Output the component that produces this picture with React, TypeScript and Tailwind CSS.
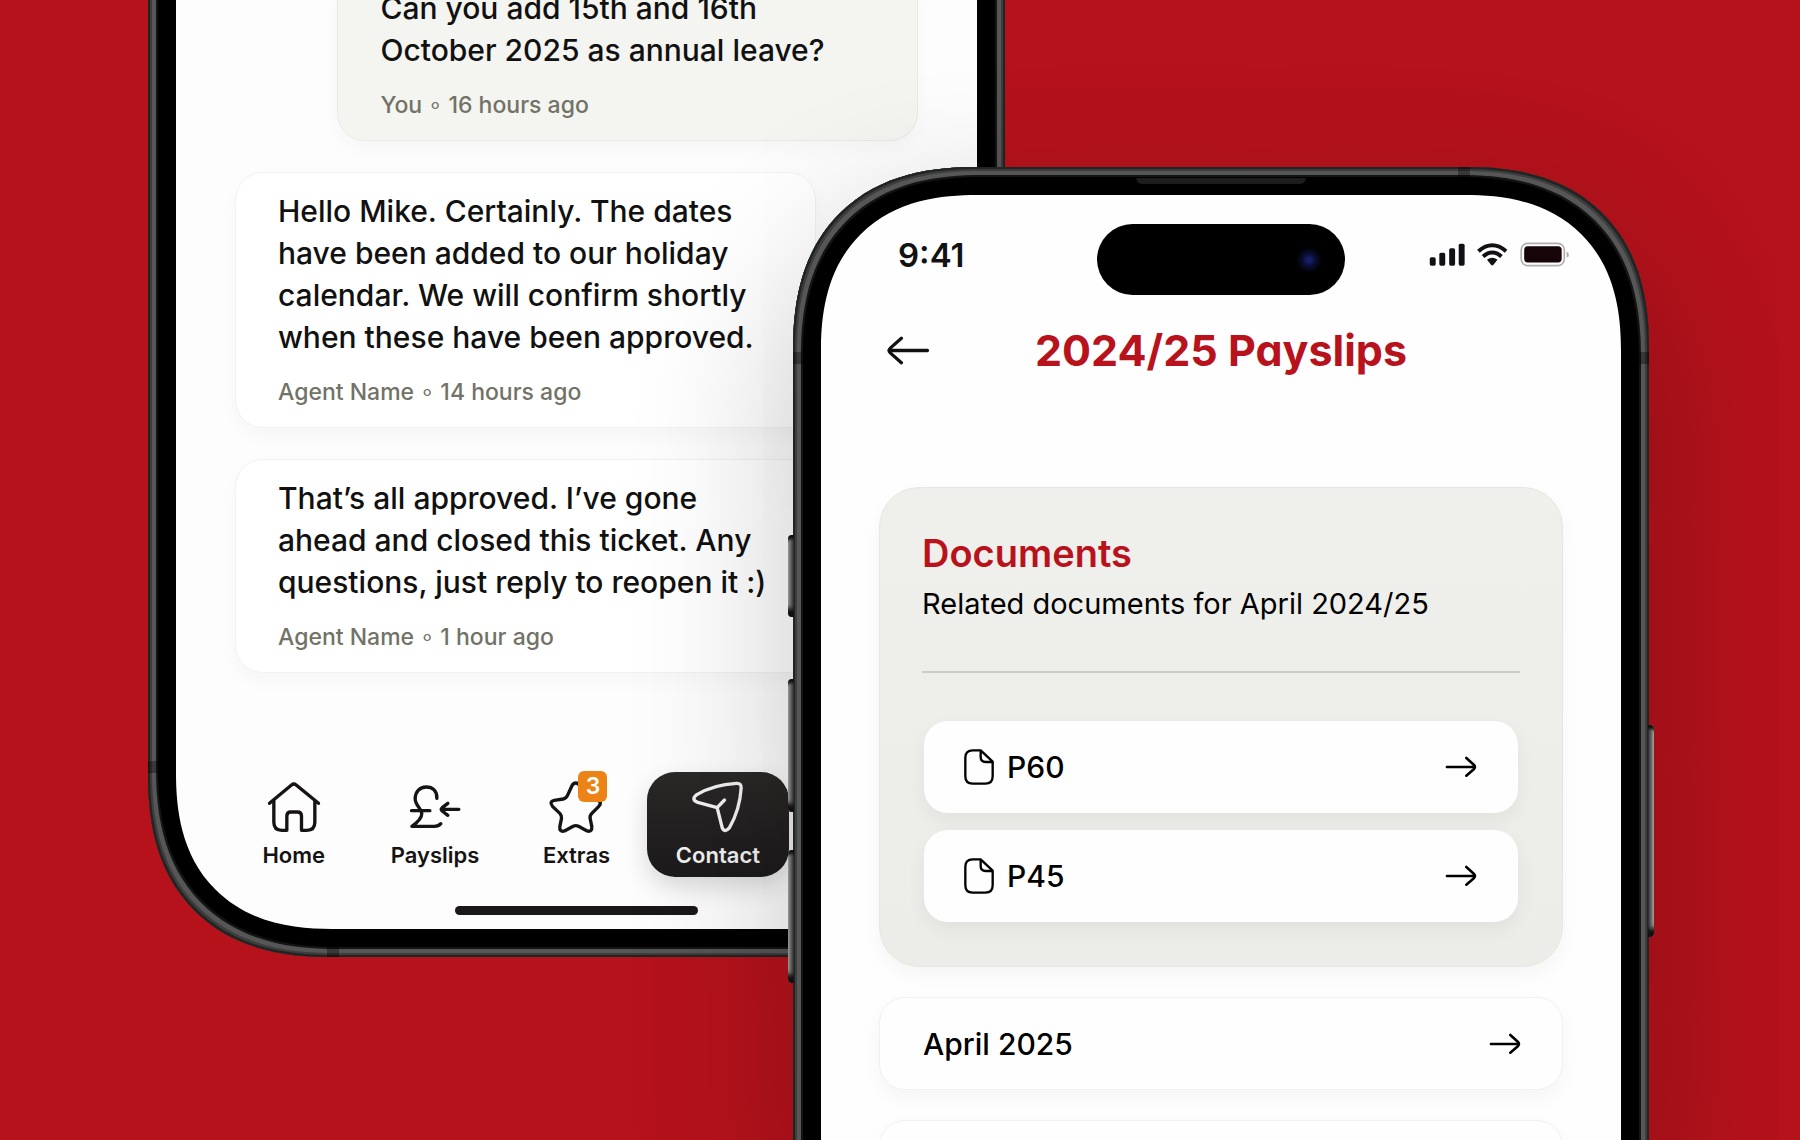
import type { ReactNode } from 'react';

interface Message {
  lines: string[];
  author: string;
  time: string;
  own?: boolean;
}

const MESSAGES: Message[] = [
  {
    lines: ['Can you add 15th and 16th', 'October 2025 as annual leave?'],
    author: 'You',
    time: '16 hours ago',
    own: true,
  },
  {
    lines: [
      'Hello Mike. Certainly. The dates',
      'have been added to our holiday',
      'calendar. We will confirm shortly',
      'when these have been approved.',
    ],
    author: 'Agent Name',
    time: '14 hours ago',
  },
  {
    lines: ['That’s all approved. I’ve gone', 'ahead and closed this ticket. Any', 'questions, just reply to reopen it :)'],
    author: 'Agent Name',
    time: '1 hour ago',
  },
];

const DOCUMENTS = ['P60', 'P45'];

/* ---------- Icons ---------- */

function TabIcon({ viewBox, children }: { viewBox: string; children: ReactNode }) {
  return (
    <svg
      viewBox={viewBox}
      className="h-[52px] w-[54px] overflow-visible"
      fill="none"
      stroke="currentColor"
      strokeWidth="10"
      strokeLinecap="round"
      strokeLinejoin="round"
      aria-hidden="true"
    >
      {children}
    </svg>
  );
}

function HomeIcon() {
  return (
    <TabIcon viewBox="411 244 161 156">
      <path d="M418 311 L484 256 Q491 250 498 256 L565 311" />
      <path d="M431 303 V368 Q431 392 455 392 H470 V349 Q470 337 482 337 H502 Q514 337 514 349 V392 H530 Q554 392 554 368 V303" />
    </TabIcon>
  );
}

function PayslipsIcon() {
  return (
    <TabIcon viewBox="834 244 161 156">
      <path d="M920 296 C921 274 908 262 888 262 C868 262 855 277 855 297 C855 317 874 327 875 341 C875 358 860 370 845 380 H913 Q925 380 932 372" />
      <path d="M844 333 H899" />
      <path d="M986 329 H934 M953 311 L936 324 Q930 329 936 334 L953 347" />
    </TabIcon>
  );
}

function StarIcon() {
  return (
    <TabIcon viewBox="148 184 161 156">
      <path d="M228 190 q8 0 12 9 l13 28 q4 9 14 11 l26 4 q15 4 4 18 l-21 21 q-7 7 -5 16 l5 24 q1 17 -14 13 l-26 -14 q-8 -4 -16 0 l-26 14 q-16 4 -14 -13 l5 -25 q1 -9 -5 -15 l-22 -21 q-11 -14 5 -18 l27 -4 q9 -2 13 -11 l13 -28 q4 -9 12 -9 Z" />
    </TabIcon>
  );
}

function ContactIcon() {
  return (
    <TabIcon viewBox="572 184 161 156">
      <path d="M650 264 L592 248 Q570 239 589 225 Q638 195 708 191 Q723 190 722 205 Q718 270 687 324 Q673 341 665 324 Z" />
      <path d="M650 264 L672 241" />
    </TabIcon>
  );
}

function BackIcon() {
  return (
    <svg
      viewBox="318 562 132 88"
      className="h-[29px] w-[44px]"
      fill="none"
      stroke="currentColor"
      strokeWidth="10"
      strokeLinecap="round"
      aria-hidden="true"
    >
      <path d="M443 606 H326 M364 569 L331 598 Q322 606 331 614 L364 643" />
    </svg>
  );
}

function ForwardIcon() {
  return (
    <svg
      viewBox="494 346 99 68"
      className="h-[22px] w-[32px] shrink-0"
      fill="none"
      stroke="currentColor"
      strokeWidth="8"
      strokeLinecap="round"
      aria-hidden="true"
    >
      <path d="M500 380 H586 M560 352 L583 373 Q590 380 583 387 L560 407" />
    </svg>
  );
}

function FileIcon() {
  return (
    <svg
      viewBox="192 116 90 108"
      className="h-[36px] w-[30px] shrink-0"
      fill="none"
      stroke="currentColor"
      strokeWidth="7"
      strokeLinejoin="round"
      aria-hidden="true"
    >
      <path d="M218 120 H242 L278 154 V198 Q278 220 256 220 H218 Q196 220 196 198 V142 Q196 120 218 120 Z" />
      <path d="M242 121 V140 Q242 155 257 155 H278" />
    </svg>
  );
}

function StatusIcons() {
  return (
    <svg viewBox="686 274 428 76" className="h-[25px] w-[143px]" aria-hidden="true">
      <g fill="#121015">
        <rect x="688" y="320" width="18" height="26" rx="5" />
        <rect x="717" y="307" width="18" height="39" rx="5" />
        <rect x="747" y="293" width="18" height="53" rx="5" />
        <rect x="776" y="279" width="18" height="67" rx="5" />
        <path d="M862 328 Q878 316 894 328 L881 344 Q878 347 875 344 Z" />
      </g>
      <g fill="none" stroke="#121015" strokeWidth="12">
        <path d="M836 302 Q878 266 920 302" />
        <path d="M850 318 Q878 294 906 318" />
      </g>
      <rect x="966" y="278" width="131" height="68" rx="20" fill="none" stroke="#b3adb0" strokeWidth="5" />
      <rect x="975" y="287" width="114" height="49" rx="11" fill="#160408" />
      <path d="M1104 304 Q1111 306 1111 313 Q1111 320 1104 322 Z" fill="#b3adb0" />
    </svg>
  );
}

/* ---------- Conversation phone ---------- */

function MessageCard({ message }: { message: Message }) {
  return (
    <article
      className={
        message.own
          ? 'w-[85%] self-end rounded-[28px] border border-[#e9e9e6] bg-[#f4f4f0] px-[42px] pt-[17px] pb-[21px] shadow-[0_8px_20px_rgba(0,0,0,0.03)]'
          : 'w-[85%] rounded-[28px] border border-[#f2f2f2] bg-white px-[42px] pt-[17px] pb-[21px] shadow-[0_8px_20px_rgba(0,0,0,0.03)]'
      }
    >
      <p className="text-[30px] leading-[42px] font-medium whitespace-nowrap text-[#111]">
        {message.lines.map((line) => (
          <span key={line} className="block">
            {line}
          </span>
        ))}
      </p>
      <p className="mt-5 text-[23px] leading-7 font-medium text-[#727266]">
        {message.author} ∘ {message.time}
      </p>
    </article>
  );
}

function Tab({ label, icon, badge, active }: { label: string; icon: ReactNode; badge?: number; active?: boolean }) {
  return (
    <button
      type="button"
      aria-current={active ? 'page' : undefined}
      className={
        active
          ? 'flex flex-col items-center rounded-[28px] bg-linear-to-b from-[#2b2828] to-[#1d1a1b] pt-[9px] pb-2 text-[#f2f2f2] shadow-[0_10px_24px_rgba(0,0,0,0.14)]'
          : 'flex flex-col items-center rounded-[28px] pt-[9px] pb-2 text-[#151313]'
      }
    >
      <span className="relative">
        {icon}
        {badge && (
          <span className="absolute -top-[10px] left-[29px] flex h-[31px] w-[29px] items-center justify-center rounded-md bg-[#ec8316] text-[23px] font-semibold text-white">
            {badge}
          </span>
        )}
      </span>
      <span className="mt-2 text-[22px] leading-7 font-semibold">{label}</span>
    </button>
  );
}

function ConversationPhone() {
  return (
    <section
      aria-label="Conversation"
      className="relative col-start-2 col-end-4 row-start-1 -mt-4 self-start rounded-b-[160px] bg-black px-7 pb-7 shadow-[inset_0_0_0_2px_#202422,inset_0_0_0_4px_#3c3d3d,inset_0_0_0_8px_#565657,inset_0_0_0_10px_#141414] supports-[corner-shape:round]:rounded-b-[184px] supports-[corner-shape:round]:[corner-shape:superellipse(1.25)]"
    >
      {/* antenna bands */}
      <span className="absolute bottom-[184px] left-0 h-3 w-[10px] bg-black/35" />
      <span className="absolute bottom-0 left-[179px] h-[10px] w-3 bg-black/35" />

      <div className="-mt-[15px] rounded-b-[130px] bg-[#fdfdfd] px-[59px] pb-[14px] supports-[corner-shape:round]:rounded-b-[156px] supports-[corner-shape:round]:[corner-shape:superellipse(1.25)]">
        <div className="flex flex-col gap-[31px]">
          {MESSAGES.map((message) => (
            <MessageCard key={message.time} message={message} />
          ))}
        </div>
        <nav className="-mx-3 mt-[99px] grid grid-cols-5">
          <Tab label="Home" icon={<HomeIcon />} />
          <Tab label="Payslips" icon={<PayslipsIcon />} />
          <Tab label="Extras" icon={<StarIcon />} badge={3} />
          <Tab label="Contact" icon={<ContactIcon />} active />
        </nav>
        <div className="mx-auto mt-[29px] h-[9px] w-[243px] rounded-full bg-[#1a1818]" />
      </div>
    </section>
  );
}

/* ---------- Payslips phone ---------- */

function SideButtons() {
  return (
    <>
      <span className="absolute top-[368px] -left-[5px] h-[82px] w-[6px] rounded-l-sm bg-linear-to-r from-[#9a9a98] to-[#2a2b2a] shadow-[inset_0_8px_3px_-4px_#111,inset_0_-12px_4px_-4px_#111]" />
      <span className="absolute top-[512px] -left-[5px] h-[133px] w-[6px] rounded-l-sm bg-linear-to-r from-[#9a9a98] to-[#2a2b2a] shadow-[inset_0_8px_3px_-4px_#111,inset_0_-12px_4px_-4px_#111]" />
      <span className="absolute top-[683px] -left-[5px] h-[133px] w-[6px] rounded-l-sm bg-linear-to-r from-[#9a9a98] to-[#2a2b2a] shadow-[inset_0_8px_3px_-4px_#111,inset_0_-12px_4px_-4px_#111]" />
      <span className="absolute top-[558px] -right-[5px] h-[212px] w-[6px] rounded-r-sm bg-linear-to-l from-[#a5a5a3] to-[#2a2b2a] shadow-[inset_0_8px_3px_-4px_#111,inset_0_-12px_4px_-4px_#111]" />
    </>
  );
}

function StatusBar() {
  return (
    <div className="grid grid-cols-[1fr_248px_1fr] items-start pt-[29px]">
      <time className="pt-[11px] pl-[77px] text-[33px] leading-10 font-semibold text-[#121212]">9:41</time>
      <div className="flex h-[71px] items-center justify-end rounded-full bg-black pr-6">
        <span className="h-6 w-6 rounded-full bg-radial from-[#14206a] from-10% via-[#0b0b30] via-40% to-[#030307] to-75%" />
      </div>
      <div className="flex justify-end pt-[18px] pr-[50px]">
        <StatusIcons />
      </div>
    </div>
  );
}

function DocumentsCard() {
  return (
    <section className="rounded-[40px] border border-[#e6e6e2] bg-linear-to-b from-[#efefec] to-[#ecece9] px-[42px] pt-[43px] pb-11 shadow-[0_8px_20px_rgba(0,0,0,0.04)]">
      <h2 className="text-[38px] leading-[44px] font-semibold text-[#b8131c]">Documents</h2>
      <p className="mt-[11px] text-[29px] leading-9 text-black">Related documents for April 2024/25</p>
      <hr className="mt-[49px] border-t-2 border-[#cbcbc6]" />
      <ul className="mt-[48px] flex flex-col gap-[17px] px-0.5">
        {DOCUMENTS.map((name) => (
          <li key={name}>
            <a
              href="#"
              className="flex h-[92px] items-center gap-[13px] rounded-[24px] bg-[#fefefe] pr-[41px] pl-10 shadow-[0_8px_20px_rgba(0,0,0,0.05)]"
            >
              <FileIcon />
              <span className="flex-1 text-[30px] leading-10 font-medium text-black">{name}</span>
              <ForwardIcon />
            </a>
          </li>
        ))}
      </ul>
    </section>
  );
}

function PayslipLink({ month }: { month?: string }) {
  return (
    <a
      href="#"
      className="flex h-[93px] shrink-0 items-center justify-between rounded-[26px] border border-[#f1f1f0] bg-[#fefefe] pr-[41px] pl-[43px] text-[30px] leading-10 font-medium text-black shadow-[0_8px_20px_rgba(0,0,0,0.04)]"
    >
      {month}
      <ForwardIcon />
    </a>
  );
}

function PayslipsPhone() {
  return (
    <section
      aria-label="Payslips"
      className="relative col-start-3 col-end-5 row-start-1 mt-[167px] -mb-4 flex flex-col rounded-t-[160px] bg-black px-7 pt-7 shadow-[inset_0_0_0_2px_#202422,inset_0_0_0_4px_#3c3d3d,inset_0_0_0_8px_#565657,inset_0_0_0_10px_#141414,0_60px_160px_rgba(0,0,0,0.24)] supports-[corner-shape:round]:rounded-t-[184px] supports-[corner-shape:round]:[corner-shape:superellipse(1.25)]"
    >
      <SideButtons />
      {/* antenna bands and earpiece */}
      <span className="absolute top-[185px] left-0 h-3 w-[10px] bg-black/35" />
      <span className="absolute top-[185px] right-0 h-3 w-[10px] bg-black/35" />
      <span className="absolute top-0 right-[179px] h-[10px] w-3 bg-black/35" />
      <span className="absolute top-[11px] left-1/2 h-[6px] w-[170px] -translate-x-1/2 rounded-b-md bg-[#1d1d1d]" />

      <div className="flex-1 rounded-t-[130px] bg-[#fefefe] supports-[corner-shape:round]:rounded-t-[156px] supports-[corner-shape:round]:[corner-shape:superellipse(1.25)]">
        <StatusBar />
        <header className="mt-[25px] grid grid-cols-[44px_1fr_44px] items-center px-[65px]">
          <button type="button" aria-label="Back" className="text-[#111]">
            <BackIcon />
          </button>
          <h1 className="text-center text-[43px] leading-[60px] font-bold text-[#b8131c] [font-feature-settings:'cv11']">
            2024/25 Payslips
          </h1>
        </header>
        <div className="mt-[107px] flex flex-col gap-[30px] px-[58px]">
          <DocumentsCard />
          <PayslipLink month="April 2025" />
          <PayslipLink />
        </div>
      </div>
    </section>
  );
}

export default function App() {
  return (
    <main className="grid h-screen w-full grid-cols-[148fr_645fr_212fr_644fr_151fr] grid-rows-1 overflow-hidden bg-[#b5121b] font-['Inter','Liberation_Sans',sans-serif]">
      <ConversationPhone />
      <PayslipsPhone />
    </main>
  );
}
